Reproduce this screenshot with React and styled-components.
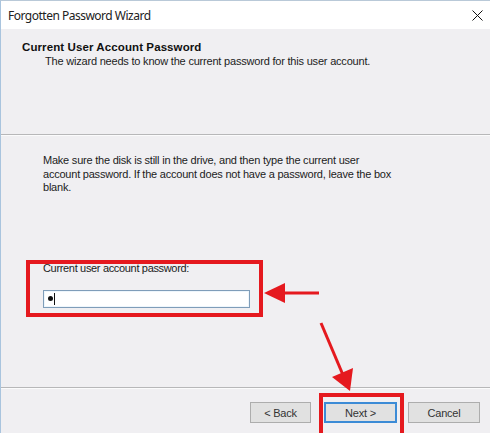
import React from 'react'
import styled, { createGlobalStyle } from 'styled-components'

const GlobalStyle = createGlobalStyle`
  html, body {
    margin: 0;
    padding: 0;
    background: #f0eff2;
    overflow: hidden;
  }
`

const Window = styled.div`
  position: relative;
  width: 490px;
  height: 433px;
  box-sizing: border-box;
  display: flex;
  flex-direction: column;
  background: #f0eff2;
  border-top: 1px solid #b9c9d8;
  border-left: 1px solid #a9c4de;
  font-family: 'Liberation Sans', Arial, sans-serif;
  color: #1c1c1c;
  overflow: hidden;
`

const TitleBar = styled.div`
  height: 28px;
  flex: none;
  display: flex;
  align-items: center;
  justify-content: space-between;
  padding: 0 7px 0 7px;
  background: #fff;
  font-family: 'Noto Sans', 'Liberation Sans', sans-serif;
  font-size: 12px;
  letter-spacing: -0.5px;
  color: #222;
`

const Header = styled.div`
  height: 105px;
  flex: none;
  box-sizing: border-box;
  padding: 12px 0 0 21px;
`

const HeaderTitle = styled.div`
  font-size: 11.5px;
  font-weight: bold;
  line-height: 12px;
  letter-spacing: 0.1px;
  color: #111;
`

const HeaderSub = styled.div`
  margin: 2px 0 0 23px;
  font-size: 11px;
  line-height: 13px;
  letter-spacing: -0.2px;
`

const Rule = styled.div`
  height: 0;
  flex: none;
  border-top: 1px solid #b7b7b9;
  border-bottom: 1px solid #fbfbfc;
`

const Body = styled.div`
  flex: 1;
  padding: 18px 0 0 42px;
`

const Text = styled.p`
  margin: 0;
  font-size: 11px;
  line-height: 13.5px;
  letter-spacing: -0.22px;
`

const Highlight = styled.div`
  width: 237px;
  box-sizing: border-box;
  margin: 65px 0 0 -17px;
  padding: 0 9px 5px 13px;
  border: 4px solid #e5191f;
`

const Label = styled.div`
  margin-top: -2px;
  font-size: 11px;
  line-height: 12px;
  letter-spacing: -0.33px;
`

const Field = styled.div`
  margin-top: 16px;
  height: 18px;
  box-sizing: border-box;
  display: flex;
  align-items: center;
  padding-left: 4px;
  background: #fff;
  border: 1px solid #7f9db9;
  box-shadow: inset 0 0 0 1px #eef6fc;
`

const Dot = styled.span`
  width: 5px;
  height: 5px;
  border-radius: 50%;
  background: #111;
`

const Caret = styled.span`
  width: 1px;
  height: 12px;
  margin-left: 1px;
  background: #111;
`

const Footer = styled.div`
  height: 44px;
  flex: none;
  box-sizing: border-box;
  display: flex;
  justify-content: flex-end;
  align-items: flex-start;
  padding: 13px 10px 0 0;
`

const Button = styled.button`
  width: ${p => p.$w}px;
  height: 21px;
  margin-left: ${p => p.$gap || 0}px;
  box-sizing: border-box;
  padding: 0;
  background: #e1e1e1;
  border: ${p => (p.$default ? '2px solid #3c8bd6' : '1px solid #adadad')};
  font-family: 'Liberation Sans', Arial, sans-serif;
  font-size: 11px;
  letter-spacing: -0.2px;
  color: #333;
`

const Overlay = styled.svg`
  position: absolute;
  left: 0;
  top: 0;
  pointer-events: none;
`

const CloseIcon = () => (
  <svg width='11' height='11' viewBox='0 0 11 11'>
    <path d='M0.5 0.5 L10.5 10.5 M10.5 0.5 L0.5 10.5' stroke='#111' strokeWidth='1' />
  </svg>
)

const Annotations = () => (
  <Overlay width='490' height='433' viewBox='0 0 490 433'>
    <line x1='318' y1='292' x2='281' y2='292' stroke='#e5191f' strokeWidth='3' />
    <polygon points='263,292 284,282 284,302' fill='#e5191f' />
    <line x1='320' y1='322' x2='342' y2='374' stroke='#e5191f' strokeWidth='3' />
    <polygon points='349,390 331,376 352,367' fill='#e5191f' />
    <rect x='320' y='394' width='81' height='45' fill='none' stroke='#e5191f' strokeWidth='4' />
  </Overlay>
)

const App = () => (
  <React.Fragment>
    <GlobalStyle />
    <Window>
      <TitleBar>
        <span>Forgotten Password Wizard</span>
        <CloseIcon />
      </TitleBar>

      <Header>
        <HeaderTitle>Current User Account Password</HeaderTitle>
        <HeaderSub>
          The wizard needs to know the current password for this user account.
        </HeaderSub>
      </Header>
      <Rule />

      <Body>
        <Text>
          Make sure the disk is still in the drive, and then type the current user
          <br />
          account password. If the account does not have a password, leave the box
          <br />
          blank.
        </Text>

        <Highlight>
          <Label>Current user account password:</Label>
          <Field>
            <Dot />
            <Caret />
          </Field>
        </Highlight>
      </Body>

      <Rule />
      <Footer>
        <Button $w={61}>&lt; Back</Button>
        <Button $w={73} $gap={13} $default>
          Next &gt;
        </Button>
        <Button $w={72} $gap={11}>
          Cancel
        </Button>
      </Footer>

      <Annotations />
    </Window>
  </React.Fragment>
)

export default App
